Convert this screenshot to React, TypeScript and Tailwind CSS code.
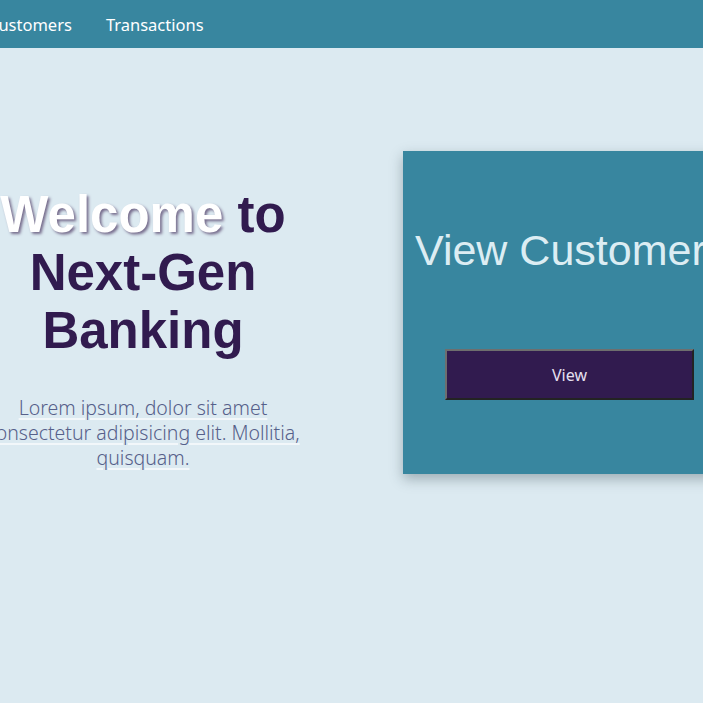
export default function App() {
  return (
    <div className="min-h-screen overflow-hidden bg-[#dceaf1]">
      <div className="-ml-[100px] w-[860px]">
        {/* top nav */}
        <nav className="flex h-12 items-center gap-[34px] bg-[#38869f] pl-[7px] pt-[3px] font-['Noto_Sans',sans-serif] text-[16.5px] text-white">
          <a href="#">Home</a>
          <a href="#">Customers</a>
          <a href="#">Transactions</a>
        </nav>

        <main className="flex items-start">
          <section className="ml-[73px] mt-[138px] w-[340px] text-center">
            <h1 className="font-['Liberation_Sans',Arial,sans-serif] text-[51px] font-bold leading-[58px] text-[#311b4f]">
              <span className="text-white [text-shadow:2px_2px_3px_#766c8c]">Welcome</span> to
              <br />
              Next-Gen
              <br />
              Banking
            </h1>
            <p className="mx-auto mt-[35px] w-[330px] font-['Noto_Sans',sans-serif] text-[19.5px] font-light leading-[25px] text-[#56608a]">
              <span className="underline decoration-[#f2f7fa] decoration-2 underline-offset-[3px]">
                Lorem ipsum, dolor sit amet consectetur adipisicing elit. Mollitia, quisquam.
              </span>
            </p>
          </section>

          <section className="ml-[90px] mt-[103px] w-[333px] bg-[#38869f] pb-[74px] pl-[12px] pt-[76px] shadow-[0_5px_12px_rgba(40,60,70,0.35)]">
            <h2 className="whitespace-nowrap font-['Liberation_Sans',Arial,sans-serif] text-[43px] leading-[46px] text-[#dcedf3]">
              View Customers
            </h2>
            <button className="ml-[30px] mt-[76px] h-[51px] w-[249px] border-2 border-b-[#232323] border-l-[#6e6e6e] border-r-[#232323] border-t-[#6e6e6e] bg-[#311b4f] font-['Noto_Sans',sans-serif] text-[16px] text-[#e6e0f0]">
              View
            </button>
          </section>
        </main>
      </div>
    </div>
  )
}
